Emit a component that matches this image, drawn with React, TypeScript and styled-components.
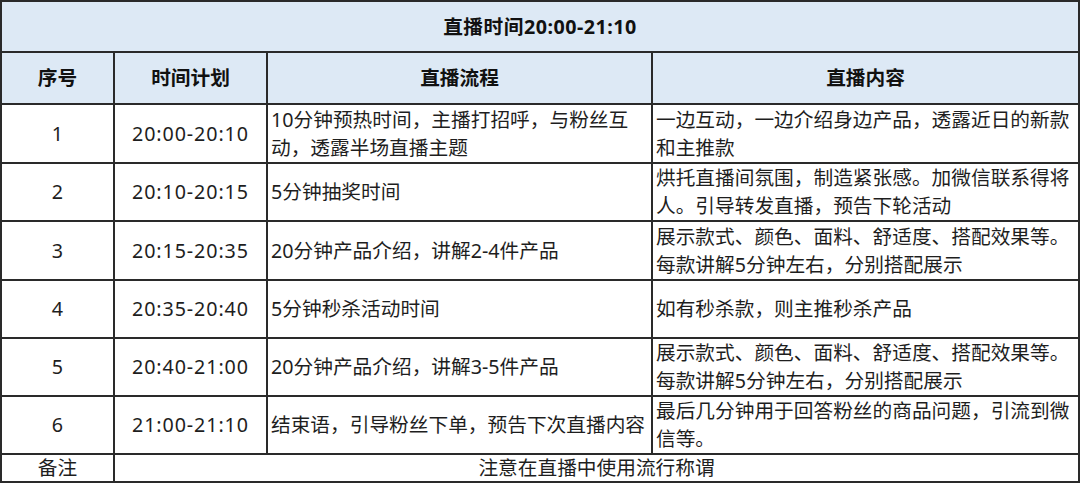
import React from "react";
import styled, { createGlobalStyle } from "styled-components";

const Global = createGlobalStyle`
  html, body { margin: 0; padding: 0; background: #ffffff; }
  body { font-family: "Noto Sans", "Noto Sans CJK SC", sans-serif; color: #222; }
`;

const Table = styled.table`
  border-collapse: collapse;
  table-layout: fixed;
  width: 1078px;
  font-size: 19.7px;
`;

const Col = styled.col<{ $w: number }>`
  width: ${(p) => p.$w}px;
`;

const Row = styled.tr<{ $h: number }>`
  height: ${(p) => p.$h}px;
`;

const Cell = styled.td<{ $align?: "left" | "center"; $head?: boolean }>`
  border: 2px solid #2a2a2a;
  padding: 0 3px;
  line-height: 28px;
  white-space: nowrap;
  overflow: hidden;
  text-align: ${(p) => p.$align ?? "center"};
  vertical-align: middle;
  background: ${(p) => (p.$head ? "#dde9f5" : "#ffffff")};
  font-weight: ${(p) => (p.$head ? 700 : 400)};
  color: ${(p) => (p.$head ? "#111" : "#1e1e1e")};
`;

const TitleCell = styled(Cell)`
  letter-spacing: 0.5px;
`;

const TimeCell = styled(Cell)`
  letter-spacing: 0.9px;
`;

const FootCell = styled(Cell)`
  line-height: 24px;
`;

type Item = { n: string; t: string; flow: string[]; content: string[]; h: number };

const rows: Item[] = [
  {
    n: "1",
    t: "20:00-20:10",
    flow: ["10分钟预热时间，主播打招呼，与粉丝互", "动，透露半场直播主题"],
    content: ["一边互动，一边介绍身边产品，透露近日的新款", "和主推款"],
    h: 59,
  },
  {
    n: "2",
    t: "20:10-20:15",
    flow: ["5分钟抽奖时间"],
    content: ["烘托直播间氛围，制造紧张感。加微信联系得将", "人。引导转发直播，预告下轮活动"],
    h: 58,
  },
  {
    n: "3",
    t: "20:15-20:35",
    flow: ["20分钟产品介绍，讲解2-4件产品"],
    content: ["展示款式、颜色、面料、舒适度、搭配效果等。", "每款讲解5分钟左右，分别搭配展示"],
    h: 59,
  },
  {
    n: "4",
    t: "20:35-20:40",
    flow: ["5分钟秒杀活动时间"],
    content: ["如有秒杀款，则主推秒杀产品"],
    h: 58,
  },
  {
    n: "5",
    t: "20:40-21:00",
    flow: ["20分钟产品介绍，讲解3-5件产品"],
    content: ["展示款式、颜色、面料、舒适度、搭配效果等。", "每款讲解5分钟左右，分别搭配展示"],
    h: 58,
  },
  {
    n: "6",
    t: "21:00-21:10",
    flow: ["结束语，引导粉丝下单，预告下次直播内容"],
    content: ["最后几分钟用于回答粉丝的商品问题，引流到微", "信等。"],
    h: 58,
  },
];

const Lines = ({ lines }: { lines: string[] }) => (
  <>
    {lines.map((l, i) => (
      <React.Fragment key={i}>
        {i > 0 && <br />}
        {l}
      </React.Fragment>
    ))}
  </>
);

export default function App() {
  return (
    <>
      <Global />
      <Table>
        <colgroup>
          <Col $w={113} />
          <Col $w={153} />
          <Col $w={385} />
          <Col $w={427} />
        </colgroup>
        <tbody>
          <Row $h={51}>
            <TitleCell $head colSpan={4}>直播时间20:00-21:10</TitleCell>
          </Row>
          <Row $h={52}>
            <Cell $head>序号</Cell>
            <Cell $head>时间计划</Cell>
            <Cell $head>直播流程</Cell>
            <Cell $head>直播内容</Cell>
          </Row>
          {rows.map((r) => (
            <Row $h={r.h} key={r.n}>
              <Cell>{r.n}</Cell>
              <TimeCell>{r.t}</TimeCell>
              <Cell $align="left">
                <Lines lines={r.flow} />
              </Cell>
              <Cell $align="left">
                <Lines lines={r.content} />
              </Cell>
            </Row>
          ))}
          <Row $h={28}>
            <FootCell>备注</FootCell>
            <FootCell colSpan={3}>注意在直播中使用流行称谓</FootCell>
          </Row>
        </tbody>
      </Table>
    </>
  );
}
